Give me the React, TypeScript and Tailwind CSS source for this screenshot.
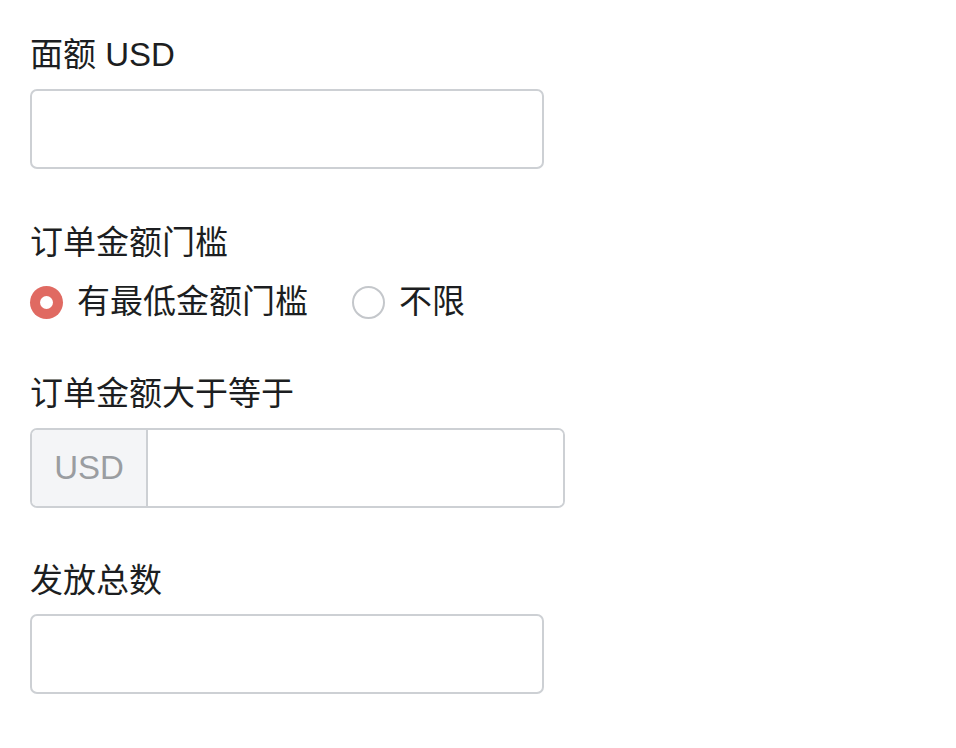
import { useState } from 'react';

const font = { fontFamily: '"Liberation Sans", "Noto Sans CJK SC", sans-serif' };

function Radio({ checked, label, onClick }: { checked: boolean; label: string; onClick: () => void }) {
    return (
        <label className="flex items-center cursor-pointer" onClick={onClick}>
            {checked ? (
                <span className="w-[33px] h-[33px] rounded-full bg-[#e06a62] flex items-center justify-center">
                    <span className="w-[13px] h-[13px] rounded-full bg-white" />
                </span>
            ) : (
                <span className="w-[33px] h-[33px] rounded-full border-2 border-[#c4c7cb] bg-white" />
            )}
            <span className="ml-[14px]">{label}</span>
        </label>
    );
}

export default function App() {
    const [threshold, setThreshold] = useState(true);

    return (
        <div className="min-h-screen bg-white pl-[30px] pt-[31px] text-[33px] leading-[48px] text-[#1c1e21]" style={font}>
            {/* 面额 */}
            <div className="mb-[10px]">面额 USD</div>
            <input className="block w-[514px] h-[80px] rounded-[7px] border-2 border-[#cdd0d4] bg-white px-[20px] outline-none" />

            {/* 订单金额门槛 */}
            <div className="mt-[50px] mb-[11px]">订单金额门槛</div>
            <div className="flex items-center h-[48px] gap-[44px]">
                <Radio checked={threshold} label="有最低金额门槛" onClick={() => setThreshold(true)} />
                <Radio checked={!threshold} label="不限" onClick={() => setThreshold(false)} />
            </div>

            {/* 订单金额大于等于 */}
            <div className="mt-[44px] mb-[10px]">订单金额大于等于</div>
            <div className="flex w-[535px] h-[80px] rounded-[7px] border-2 border-[#cdd0d4] overflow-hidden">
                <div className="w-[116px] shrink-0 bg-[#f4f5f7] border-r-2 border-[#cdd0d4] flex items-center justify-center text-[#9a9da1]">
                    USD
                </div>
                <input className="flex-1 min-w-0 bg-white px-[20px] outline-none" />
            </div>

            {/* 发放总数 */}
            <div className="mt-[49px] mb-[9px]">发放总数</div>
            <input className="block w-[514px] h-[80px] rounded-[7px] border-2 border-[#cdd0d4] bg-white px-[20px] outline-none" />
        </div>
    );
}
